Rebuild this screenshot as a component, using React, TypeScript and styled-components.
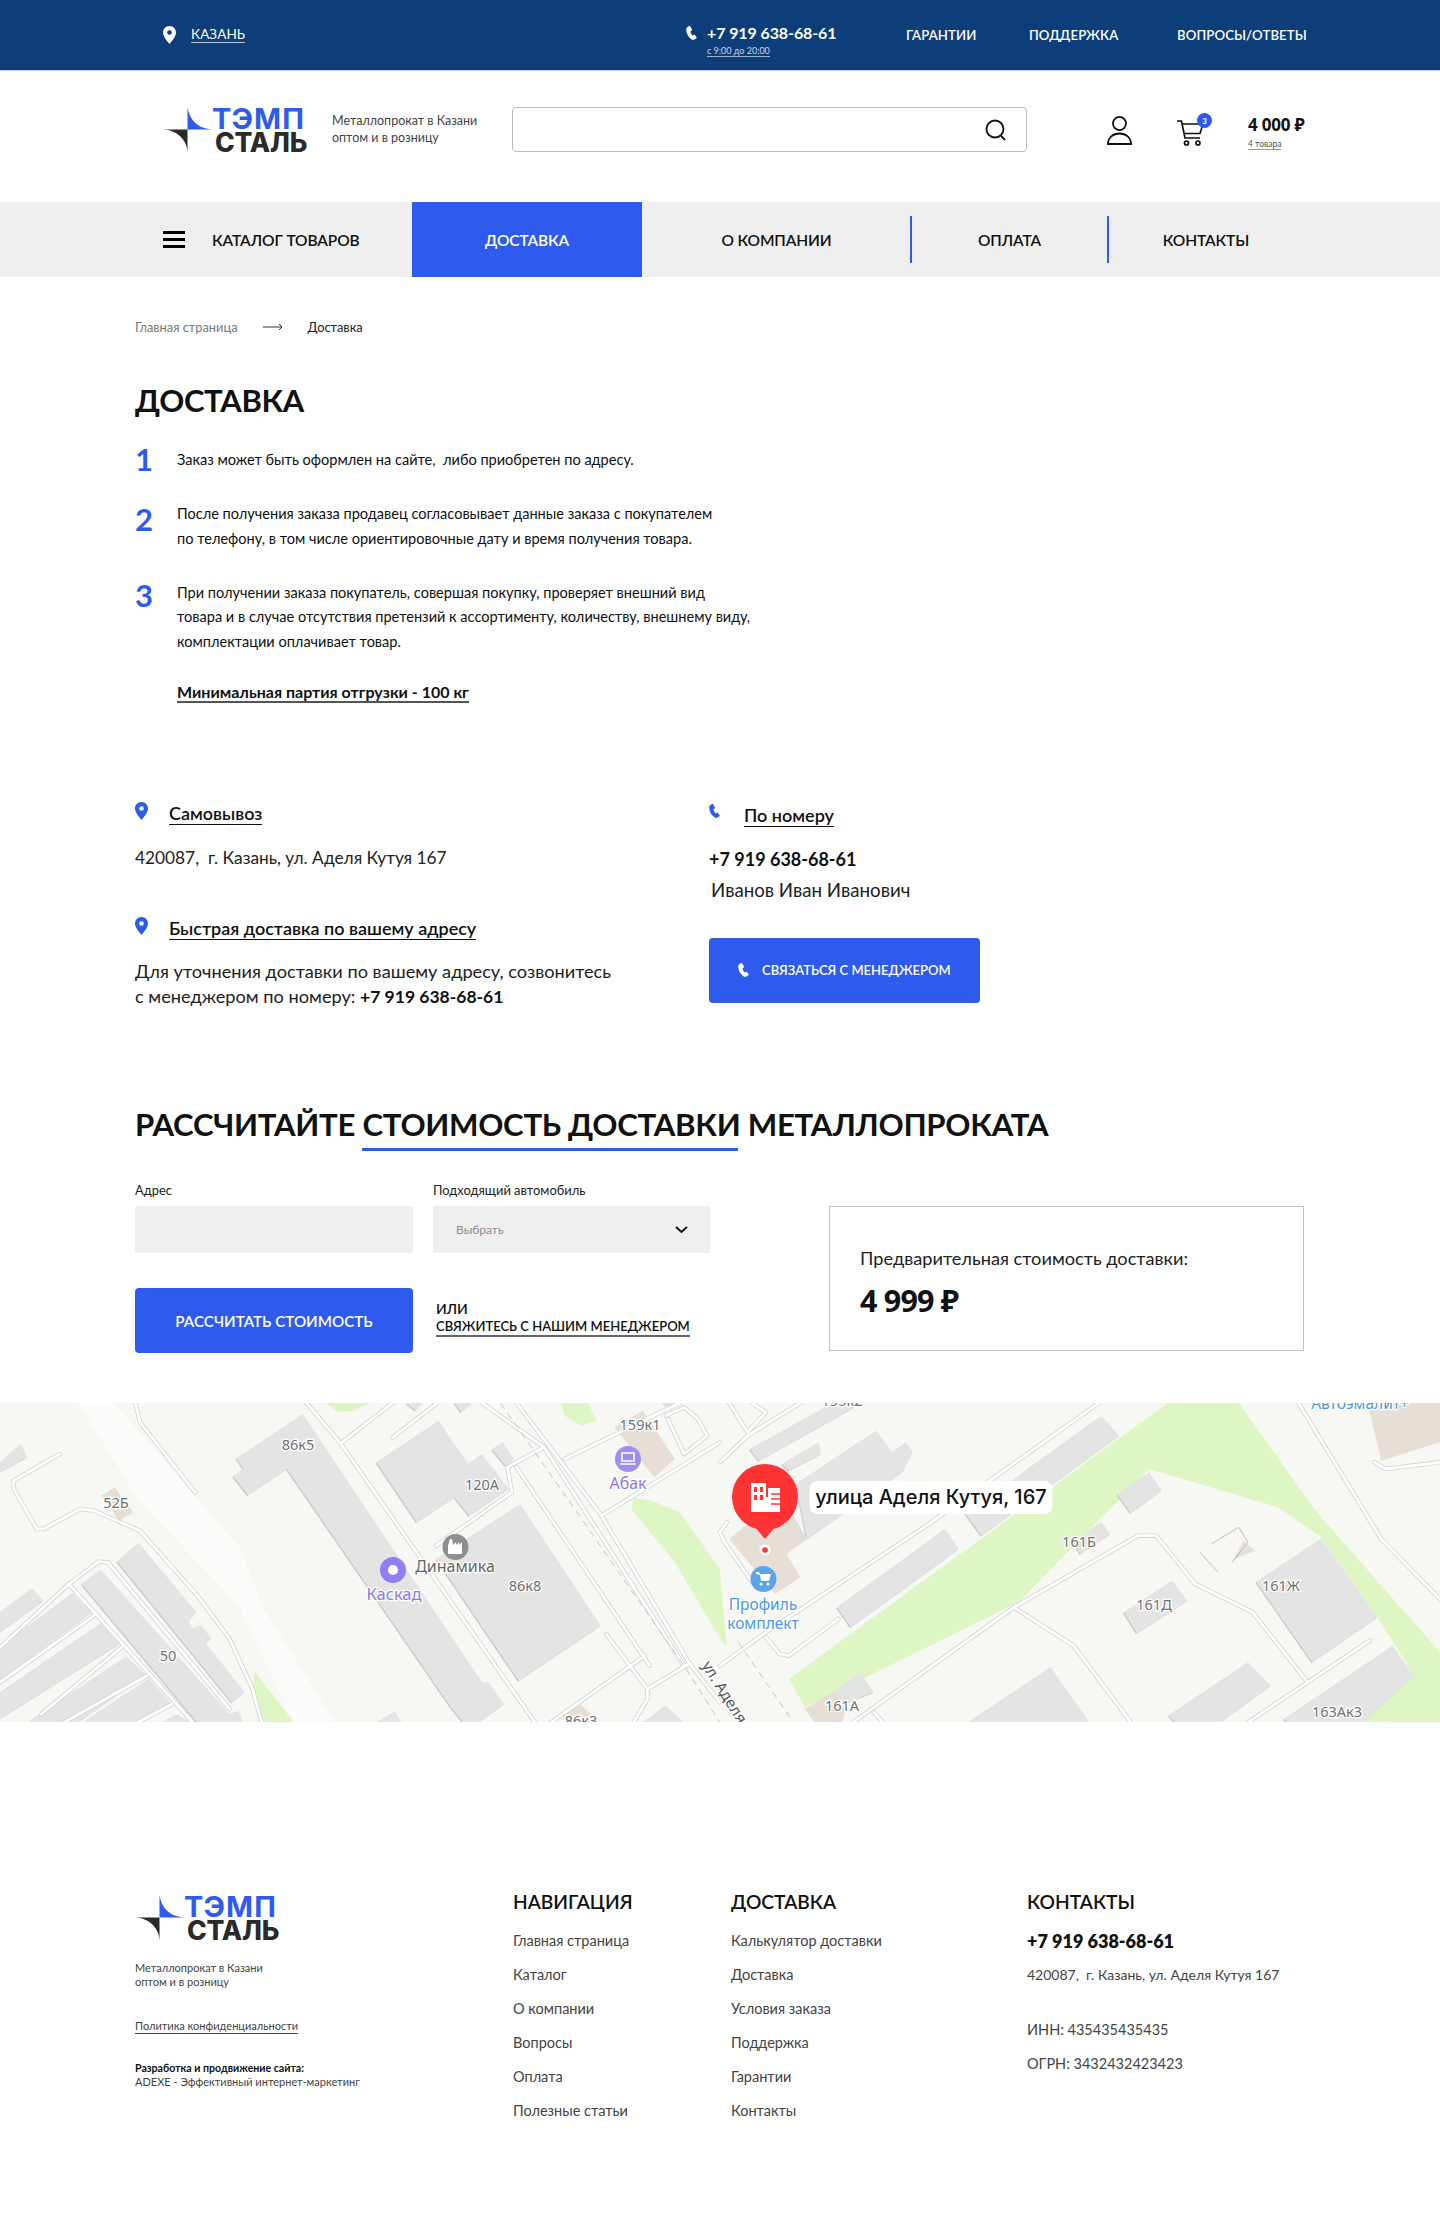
import React from 'react';
import styled, { createGlobalStyle } from 'styled-components';

const BLUE = '#2e5bee';
const FONT = '"Lato", "Open Sans", "Noto Sans", sans-serif';

const Global = createGlobalStyle`
  html, body { margin: 0; padding: 0; background: #fff; }
  body { font-family: ${FONT}; color: #111; }
  * { box-sizing: border-box; }
`;

const Page = styled.div`
  width: 1440px;
  height: 2219px;
  overflow: hidden;
`;

/* ---------- top bar ---------- */
const TopBar = styled.div`
  height: 71px;
  background: #0d3e7a;
  border-bottom: 1px solid #c8d3e2;
  padding-left: 163px;
  display: grid;
  grid-template-columns: 523px 220px 123px 148px 140px;
  align-items: center;
  color: #fff;
`;
const City = styled.div`
  display: flex;
  align-items: center;
  gap: 15px;
`;
const CityLink = styled.span`
  font-size: 13.5px;
  letter-spacing: 0.1px;
  border-bottom: 1px solid #b7c6da;
  line-height: 15px;
`;
const PhoneBlock = styled.div`
  display: grid;
  grid-template-columns: 21px auto;
  justify-content: start;
  align-items: center;
  margin-top: 10px;
`;
const TopPhone = styled.span`
  font-size: 16px;
  font-weight: 700;
  line-height: 20px;
  letter-spacing: -0.1px;
`;
const Hours = styled.span`
  grid-column: 2;
  justify-self: start;
  font-size: 9px;
  line-height: 11px;
  margin-top: 2px;
  color: #c9d5e6;
  border-bottom: 1px solid #9fb2cc;
`;
const TopLink = styled.span`
  font-size: 13.2px;
  font-weight: 600;
  letter-spacing: 0.1px;
`;

/* ---------- header ---------- */
const Header = styled.div`
  height: 131px;
  padding: 36px 0 0 163px;
  display: grid;
  grid-template-columns: 169px 180px 595px 70px 71px 100px;
  align-items: start;
`;
const LogoBox = styled.div`
  position: relative;
  width: 144px;
  height: 45px;
`;
const LogoStar = styled.svg`
  position: absolute;
  left: 0;
  top: 0;
`;
const LogoTop = styled.span`
  position: absolute;
  left: 49px;
  top: 1px;
  font-family: "Inter", sans-serif;
  font-size: 29px;
  line-height: 22px;
  font-weight: 700;
  color: ${BLUE};
  letter-spacing: 1.1px;
`;
const LogoBottom = styled.span`
  position: absolute;
  left: 52px;
  top: 24px;
  font-family: "Inter", sans-serif;
  font-size: 26.5px;
  line-height: 22px;
  font-weight: 800;
  color: #2a2a2a;
  letter-spacing: -0.2px;
`;
const Tagline = styled.div`
  font-size: 12.5px;
  line-height: 17px;
  color: #444;
  margin-top: 5px;
`;
const SearchBox = styled.div`
  width: 515px;
  height: 45px;
  border: 1.5px solid #bdbdbd;
  border-radius: 4px;
  display: flex;
  align-items: center;
  justify-content: flex-end;
  padding-right: 19px;
`;
const CartBox = styled.div`
  position: relative;
  width: 30px;
  margin-top: 11px;
`;
const Badge = styled.span`
  position: absolute;
  left: 20px;
  top: -5px;
  width: 15px;
  height: 15px;
  border-radius: 50%;
  background: ${BLUE};
  color: #fff;
  font-size: 8px;
  font-weight: 700;
  display: flex;
  align-items: center;
  justify-content: center;
`;
const UserBox = styled.div`
  margin-top: 9px;
`;
const PriceBlock = styled.div`
  display: flex;
  flex-direction: column;
  align-items: flex-start;
  margin-top: 7px;
`;
const Price = styled.span`
  font-size: 17px;
  font-weight: 700;
  line-height: 22px;
  letter-spacing: -0.2px;
  font-family: "Noto Sans", sans-serif;
`;
const PriceNote = styled.span`
  font-size: 8.5px;
  line-height: 10px;
  margin-top: 3px;
  color: #555;
  border-bottom: 1px solid #999;
`;

/* ---------- nav ---------- */
const Nav = styled.nav`
  height: 75px;
  background: #efefef;
  display: grid;
  grid-template-columns: 412px 230px 269px 197px 196px;
  margin-bottom: 40px;
`;
const NavCatalog = styled.div`
  padding-left: 163px;
  display: flex;
  align-items: center;
  gap: 27px;
  font-size: 15.5px;
  font-weight: 600;
  letter-spacing: -0.1px;
`;
const Burger = styled.span`
  width: 22px;
  height: 17px;
  border-top: 3px solid #000;
  border-bottom: 3px solid #000;
  position: relative;
  &::after {
    content: '';
    position: absolute;
    left: 0;
    right: 0;
    top: 4px;
    height: 3px;
    background: #000;
  }
`;
const NavItem = styled.div<{ $active?: boolean; $divider?: boolean }>`
  display: flex;
  align-items: center;
  justify-content: center;
  position: relative;
  font-size: 15.5px;
  font-weight: 600;
  letter-spacing: -0.1px;
  background: ${p => (p.$active ? BLUE : 'transparent')};
  color: ${p => (p.$active ? '#fff' : '#111')};
  ${p => p.$divider && `&::before { content: ''; position: absolute; left: -1px; top: 14px; height: 47px; width: 2px; background: ${BLUE}; }`}
`;

/* ---------- content ---------- */
const Main = styled.main`
  padding: 0 135px;
`;
const Crumbs = styled.div`
  height: 20px;
  display: flex;
  align-items: center;
  font-size: 12.8px;
  color: #7a7a7a;
  gap: 25px;
`;
const CrumbNow = styled.span`
  color: #222;
`;
const Title = styled.h1`
  margin: 43px 0 28px;
  font-size: 31px;
  line-height: 40px;
  font-weight: 700;
  color: #111;
  letter-spacing: -0.3px;
`;
const Steps = styled.ol`
  list-style: none;
  margin: 0;
  padding: 0;
  display: grid;
  gap: 29.5px;
`;
const Step = styled.li`
  display: grid;
  grid-template-columns: 42px 1fr;
`;
const StepNum = styled.span<{ $dy: number }>`
  font-size: 31px;
  font-weight: 700;
  line-height: 24px;
  color: ${BLUE};
  position: relative;
  top: ${p => p.$dy}px;
`;
const StepText = styled.p`
  margin: 0;
  font-size: 14.55px;
  line-height: 24.5px;
  color: #111;
  white-space: nowrap;
`;
const MinLine = styled.div`
  margin: 28px 0 0 42px;
  line-height: 20px;
`;
const MinLink = styled.span`
  font-size: 16px;
  font-weight: 700;
  border-bottom: 2px solid #555;
`;
const Contacts = styled.section`
  margin-top: 100px;
  display: grid;
  grid-template-columns: 574px 1fr;
`;
const ContactCol = styled.div`
  display: flex;
  flex-direction: column;
  align-items: flex-start;
`;
const ContactHead = styled.div<{ $wide?: boolean; $mt?: number }>`
  display: flex;
  align-items: flex-start;
  gap: ${p => (p.$wide ? 24 : 21)}px;
  height: 24px;
  margin-top: ${p => p.$mt ?? 0}px;
`;
const ContactHeadText = styled.span`
  font-size: 18px;
  font-weight: 600;
  line-height: 21px;
  margin-top: 1px;
  border-bottom: 1px solid #111;
`;
const Address = styled.p`
  margin: 18.5px 0 0;
  font-size: 17.3px;
  line-height: 26px;
  color: #222;
`;
const ContactNote = styled.p`
  margin: 17.5px 0 0;
  font-size: 18.2px;
  line-height: 25px;
  color: #222;
  white-space: nowrap;
`;
const ContactPhone = styled.p`
  margin: 17.5px 0 0;
  font-size: 18px;
  line-height: 26px;
  font-weight: 700;
  color: #111;
`;
const ContactName = styled.p`
  margin: 5px 0 0 2px;
  font-size: 18.7px;
  line-height: 26px;
  color: #222;
`;
const Strong = styled.b`
  font-size: 17.5px;
  font-weight: 700;
  color: #111;
`;
const CallButton = styled.button`
  width: 271px;
  height: 65px;
  margin-top: 35px;
  background: ${BLUE};
  border: 0;
  border-radius: 4px;
  color: #fff;
  font-family: ${FONT};
  font-size: 13px;
  font-weight: 600;
  display: flex;
  align-items: center;
  gap: 13px;
  padding-left: 29px;
`;
const CalcTitle = styled.h2`
  margin: 93.5px 0 0;
  font-size: 31.2px;
  line-height: 44px;
  font-weight: 700;
  color: #111;
  letter-spacing: -0.3px;
  white-space: nowrap;
`;
const Under = styled.span`
  position: relative;
  &::after {
    content: '';
    position: absolute;
    left: 0;
    right: 3px;
    bottom: -8px;
    height: 3px;
    background: ${BLUE};
  }
`;
const CalcGrid = styled.section`
  margin-top: 36px;
  display: grid;
  grid-template-columns: 694px 475px;
`;
const FormGrid = styled.div`
  display: grid;
  grid-template-columns: 278px 277px;
  column-gap: 20px;
  row-gap: 35px;
  align-items: start;
`;
const Field = styled.div`
  display: flex;
  flex-direction: column;
  gap: 8px;
`;
const Label = styled.label`
  font-size: 12.9px;
  line-height: 16px;
  color: #222;
`;
const InputBox = styled.div`
  height: 47px;
  background: #efefef;
  border-radius: 2px;
  display: flex;
  align-items: center;
  justify-content: space-between;
  padding: 0 22px 0 23px;
  font-size: 12px;
  color: #8c8c8c;
`;
const CalcButton = styled.button`
  height: 65px;
  background: ${BLUE};
  border: 0;
  border-radius: 4px;
  color: #fff;
  font-family: ${FONT};
  font-size: 15.2px;
  font-weight: 600;
`;
const OrBlock = styled.div`
  display: flex;
  flex-direction: column;
  align-items: flex-start;
  padding: 11px 0 0 3px;
  font-size: 14px;
  font-weight: 600;
  line-height: 19px;
`;
const OrLink = styled.span`
  border-bottom: 2px solid #666;
  line-height: 17px;
  font-size: 13px;
`;
const ResultBox = styled.div`
  height: 145px;
  margin-top: 24px;
  border: 1.5px solid #c4c4c4;
  padding: 38.5px 30px 0;
`;
const ResultLabel = styled.div`
  font-size: 18.2px;
  line-height: 24px;
  color: #222;
`;
const ResultValue = styled.div`
  margin-top: 11px;
  font-size: 30.5px;
  line-height: 38px;
  font-weight: 700;
  font-family: "Noto Sans", sans-serif;
  letter-spacing: -0.8px;
`;
const MapBox = styled.svg`
  display: block;
  width: 1440px;
  height: 319px;
  margin-top: 50px;
  background: #f7f7f4;
`;
const MapText = styled.text<{ $c?: string; $s?: number }>`
  font-family: "Noto Sans", sans-serif;
  font-size: ${p => p.$s ?? 14.5}px;
  fill: ${p => p.$c ?? '#6f6f6f'};
  stroke: #fff;
  stroke-width: 2.5px;
  paint-order: stroke;
  text-anchor: middle;
`;
const MapTitle = styled.text`
  font-family: "Inter", sans-serif;
  font-size: 20px;
  font-weight: 500;
  fill: #111;
  text-anchor: middle;
`;

/* ---------- footer ---------- */
const Footer = styled.footer`
  padding: 168px 0 0 135px;
  display: grid;
  grid-template-columns: 378px 218px 296px 300px;
  align-items: start;
`;
const FootBrand = styled.div`
  padding-top: 5px;
`;
const FootTag = styled.div`
  margin-top: 21px;
  font-size: 11px;
  line-height: 14px;
  color: #444;
`;
const FootPolicy = styled.span`
  display: inline-block;
  margin-top: 30px;
  font-size: 11px;
  line-height: 14px;
  color: #444;
  border-bottom: 1px solid #444;
`;
const FootDev = styled.div`
  margin-top: 27px;
  font-size: 11px;
  line-height: 14px;
  color: #444;
`;
const FootDevTitle = styled.b`
  display: block;
  font-size: 10.6px;
  font-weight: 700;
  color: #111;
`;
const FootHead = styled.div`
  font-size: 19.2px;
  line-height: 24px;
  font-weight: 600;
  color: #111;
`;
const FootList = styled.div`
  margin-top: 9px;
  display: grid;
  grid-auto-rows: 34px;
  align-items: center;
  font-size: 14.5px;
  color: #444;
`;
const FootPhone = styled.div`
  margin-top: 14px;
  font-size: 18px;
  line-height: 26px;
  font-weight: 800;
  color: #111;
`;
const FootInfo = styled.div<{ $gap?: number; $s?: number }>`
  margin-top: ${p => p.$gap ?? 0}px;
  font-size: ${p => p.$s ?? 14.5}px;
  line-height: 34px;
  color: #444;
`;

/* ---------- drawings ---------- */
const Pin = ({ color, w = 13, h = 18 }: { color: string; w?: number; h?: number }) => (
  <svg width={w} height={h} viewBox="0 0 13 18">
    <path fillRule="evenodd" fill={color} d="M6.5 0C2.9 0 0 2.9 0 6.5 0 10.5 4 15 6.5 18 9 15 13 10.500 13 6.500 13 2.900 10.100 0 6.500 0zM6.500 4.200a2.300 2.300 0 1 1 0 4.600 2.300 2.300 0 0 1 0-4.600z" />
  </svg>
);
const Handset = ({ color, w = 11, h = 14 }: { color: string; w?: number; h?: number }) => (
  <svg width={w} height={h} viewBox="0 0 11 14">
    <path fill={color} d="M2.200.4C.7 1.200 0 2.600.2 4.300c.4 3.800 2.600 7.500 5.500 9.200.7.400 1.500.5 2.300.2l2.400-1.400c.4-.2.500-.6.300-.9L8.900 9c-.2-.3-.6-.4-.9-.2l-1.300.8c-1-.9-2-2.900-2.200-4.400l1.200-.8c.3-.2.400-.5.300-.8L4.500.7C4.300.2 3.700 0 3.200.1z" />
  </svg>
);
const Logo = () => (
  <LogoBox>
    <LogoStar width="51" height="45" viewBox="0 0 51 45">
      <path fill={BLUE} d="M24.500 0V22.500H50C38 22 27 16 24.500 0z" />
      <path fill="#2a2a2a" d="M0 22.500H24.500V45C24 33 14 22.800 0 22.500z" />
    </LogoStar>
    <LogoTop>ТЭМП</LogoTop>
    <LogoBottom>СТАЛЬ</LogoBottom>
  </LogoBox>
);

const z = (s: string, ox = 0) =>
  s.trim().split(/\s+/).map(p => {
    const [x, y] = p.split(',').map(Number);
    return `${(x / 2.178 + ox).toFixed(1)},${(y / 3 - 4).toFixed(1)}`;
  }).join(' ');

const greens: [string, number][] = [
  ['710,12 735,38 770,35 805,12', 0],
  ['1222,12 1230,50 1265,80 1300,65 1280,12', 0],
  ['1380,295 1375,330 1470,490 1560,700 1583,745 1568,510 1480,340 1420,305', 0],
  ['555,818 550,860 575,970 640,970', 0],
  ['975,12 150,840 185,925 650,610 935,210 1215,325 1310,415 1432,655 1512,830 1400,970 1568,970 1568,760 1300,340 1130,12', 720],
];
const grays: [string, number][] = [
  ['660,45 1050,850 1062,848 1098,915 1040,972 1010,972 980,920 625,210 540,288 508,232 530,210 515,178', 0],
  ['955,65 820,190 908,370 990,295 1022,350 1108,270 1050,165 1020,195', 0],
  ['1095,130 1072,150 1100,200 1120,180', 0],
  ['1133,315 950,480 1130,845 1308,680', 0],
  ['302,432 255,487 505,910 533,880 448,733 460,718 438,678 418,688 412,665 428,640', 0],
  ['220,512 178,555 430,970 530,970 520,935 500,945', 0],
  ['70,568 0,640 0,700 95,605', 0],
  ['158,582 0,745 0,840 200,640', 0],
  ['220,672 0,880 0,960 260,735', 0],
  ['275,772 60,970 170,970 318,828', 0],
  ['325,838 180,970 300,970 370,910', 0],
  ['385,945 355,970 415,970', 0],
  ['0,190 45,135 60,175 0,220', 0],
  ['1450,920 1400,970 1490,970', 0],
  ['860,937 820,970 875,970', 0],
  ['885,12 905,35 920,12', 0],
  ['990,12 1005,40 1028,12', 0],
  ['830,50 870,110 570,410 535,345', 720],
  ['215,130 135,195 150,215 220,165', 720],
  ['340,95 165,255 190,420 400,215 420,160 405,130 375,160', 720],
  ['245,12 65,150 85,185 310,12', 720],
  ['490,390 255,625 285,685 520,450', 720],
  ['935,220 865,285 895,342 962,275', 720],
  ['830,368 770,430 785,465 850,405', 720],
  ['985,545 880,640 908,703 1018,605', 720],
  ['1310,418 1168,548 1290,790 1432,655', 720],
  ['720,805 540,970 805,970', 720],
  ['1150,790 978,948 990,970 1090,970 1200,860', 720],
  ['1465,740 1228,960 1235,970 1400,970 1512,830', 720],
  ['305,818 250,880 280,910 335,880', 720],
];
const beiges: [string, number][] = [
  ['250,265 220,290 260,365 290,340', 0],
  ['1262,912 1225,950 1235,970 1290,970 1290,950', 0],
  ['1400,35 1338,85 1425,235 1470,180', 0],
  ['1440,12 1455,30 1470,12', 0],
  ['250,875 185,930 205,970 265,970 280,910', 720],
  ['90,340 20,420 120,585 175,535 145,465 190,420 160,350', 720],
  ['1410,12 1440,185 1568,130 1568,12', 720],
  ['1120,480 1165,455 1140,425 1115,490', 720],
];
const roads: [string, number][] = [
  ['668,12 740,130 1165,970', 0],
  ['745,130 855,12', 0],
  ['855,115 950,15', 0],
  ['295,12 305,70 425,280', 0],
  ['130,165 30,245 30,270 80,390 95,390 175,330 205,335 305,395 430,590 500,720 550,870 570,970', 0],
  ['150,555 215,488 235,490 500,930', 0],
  ['150,555 420,970', 0],
  ['150,555 0,745', 0],
  ['205,650 0,850', 0],
  ['265,745 90,945', 0],
  ['320,830 140,970', 0],
  ['375,915 300,970', 0],
  ['1125,12 1310,350 1500,790 1568,910', 0],
  ['1050,12 1185,145 1490,800', 0],
  ['1125,205 1415,800', 0],
  ['1105,205 1185,145', 0],
  ['1105,205 1115,280 950,440', 0],
  ['1230,180 1480,12', 0],
  ['1310,350 1568,130', 0],
  ['1320,705 1410,870 1410,900 1380,970', 0],
  ['1410,870 1500,795', 0],
  ['1200,970 1405,770', 0],
  ['1450,50 1490,25 1520,60 1540,110 1490,165 1455,60', 0],
  ['825,12 450,380 100,700 0,800', 720],
  ['640,625 910,410 950,410 1035,555 1160,640 1280,850', 720],
  ['640,625 290,970', 720],
  ['640,625 770,740 895,970', 720],
  ['1415,725 1280,850 1150,970', 720],
  ['258,660 150,770 130,765 100,715', 720],
  ['1260,12 1440,420 1568,600', 720],
  ['1425,190 1450,210 1568,190', 720],
  ['335,940 355,970', 720],
  ['15,370 0,400 10,430 70,550', 720],
  ['175,12 60,110 0,190', 720],
  ['70,12 100,40 60,100 20,12', 720],
];
type L = [string, number, number, string?, number?];
const labels: L[] = [
  ['86к5', 298, 47], ['120А', 482, 87], ['159к1', 640, 27], ['52Б', 116, 105], ['86к8', 525, 188], ['50', 168, 258],
  ['86к3', 581, 323], ['161Б', 1079, 144], ['161Д', 1154, 207], ['161Ж', 1281, 188], ['161А', 842, 308], ['163Ак3', 1337, 314],
  ['155к2', 842, 3], ['Автоэмалит+', 1360, 6, '#4c97e6', 15.5],
  ['Динамика', 455, 169, '#666', 16], ['Каскад', 394, 197, '#8a78ea', 16.5], ['Абак', 628, 86, '#8a78ea', 16],
  ['Профиль', 763, 207, '#4c97e6', 15.5], ['комплект', 763, 226, '#4c97e6', 15.5],
];

const MapView = () => (
  <MapBox viewBox="0 0 1440 319">
    <polygon fill="#fcfcfa" points={z('165,0 240,0 525,450 570,620 730,972 640,972 520,620 300,300')} />
    {greens.map(([s, o]) => <polygon key={s} fill="#def6c4" points={z(s, o)} />)}
    {grays.map(([s, o]) => <polygon key={s} transform="translate(-1 1)" fill="#cbcbcb" points={z(s, o)} />)}
    {grays.map(([s, o]) => <polygon key={s} fill="#e4e4e4" points={z(s, o)} />)}
    {beiges.map(([s, o]) => <polygon key={s} fill="#e7dfd5" points={z(s, o)} />)}
    {roads.map(([s, o]) => <polyline key={s} fill="none" stroke="#d4d4d4" strokeWidth="4.500" strokeLinejoin="round" strokeLinecap="round" points={z(s, o)} />)}
    {roads.map(([s, o]) => <polyline key={s} fill="none" stroke="#fff" strokeWidth="2.800" strokeLinejoin="round" strokeLinecap="round" points={z(s, o)} />)}
    <polyline fill="none" stroke="#c4c4c4" strokeDasharray="7 5" points={z('1090,12 1490,800 1568,970')} />
    <polyline fill="none" stroke="#c4c4c4" strokeDasharray="7 5" points={z('40,730 160,970', 720)} />
    <polyline fill="none" stroke="#bdbdbd" points={z('1070,435 1130,385 1150,430 1115,490', 720)} />
    <polyline fill="none" stroke="#bdbdbd" points={z('1045,460 1085,520', 720)} />
    {labels.map(([t, x, y, c, s]) => <MapText key={t} x={x} y={y} $c={c} $s={s}>{t}</MapText>)}
    <MapText x={0} y={0} $c="#555" $s={15.500} transform="translate(720 292) rotate(58)">ул. Аделя</MapText>

    <circle cx="393" cy="167" r="13" fill="#8f7ff0" />
    <circle cx="393" cy="167" r="5" fill="#fff" />
    <circle cx="455.500" cy="144" r="13" fill="#8e8e8e" />
    <path fill="#fff" d="M448 151v-9l2-6h2l1 6 3-3v3l3-3v3l3-3v12z" />
    <circle cx="628" cy="56" r="13" fill="#9d8ff0" />
    <path fill="none" stroke="#fff" strokeWidth="1.500" d="M622 50h12v8h-12zM620 61h16" />
    <circle cx="763.500" cy="176" r="13" fill="#5ba4ec" />
    <path fill="#fff" d="M756 169h3l1 2h11l-2 7h-8l-1-6-4-1z" />
    <circle cx="761" cy="181" r="1.500" fill="#fff" />
    <circle cx="768" cy="181" r="1.500" fill="#fff" />

    <ellipse cx="765" cy="94" rx="33" ry="33" fill="#ff3333" />
    <path fill="#ff3333" d="M755 124h20l-10 12z" />
    <circle cx="765" cy="147" r="5.500" fill="#fff" />
    <circle cx="765" cy="147" r="2.800" fill="#f33" />
    <path fill="#fff" fillRule="evenodd" d="M751 80h15v14h2v-9h12v24h-29zM754 84v5h3v-5zM760 84v5h3v-5zM754 92v5h3v-5zM760 92v5h3v-5z" />
    <path stroke="#ff3333" strokeWidth="1.500" d="M771 91h9M771 96h9M771 101h9" />
    <rect x="809.500" y="78" width="243" height="33" rx="8" fill="#fff" />
    <MapTitle x="931" y="101">улица Аделя Кутуя, 167</MapTitle>
  </MapBox>
);

export default function App() {
  return (
    <Page>
      <Global />
      <TopBar>
        <City><Pin color="#fff" /><CityLink>КАЗАНЬ</CityLink></City>
        <PhoneBlock>
          <Handset color="#fff" />
          <TopPhone>+7 919 638-68-61</TopPhone>
          <Hours>с 9:00 до 20:00</Hours>
        </PhoneBlock>
        <TopLink>ГАРАНТИИ</TopLink>
        <TopLink>ПОДДЕРЖКА</TopLink>
        <TopLink>ВОПРОСЫ/ОТВЕТЫ</TopLink>
      </TopBar>

      <Header>
        <Logo />
        <Tagline>Металлопрокат в Казани<br />оптом и в розницу</Tagline>
        <SearchBox>
          <svg width="22" height="24" viewBox="0 0 22 24" fill="none" stroke="#111" strokeWidth="1.800">
            <circle cx="10" cy="11" r="8.500" /><path d="M16 18l4 4" />
          </svg>
        </SearchBox>
        <UserBox>
          <svg width="25" height="29" viewBox="0 0 25 29" fill="none" stroke="#111" strokeWidth="1.800">
            <ellipse cx="12.500" cy="7.500" rx="6.500" ry="6.600" />
            <path d="M1 28c0-6.500 5-10.500 11.500-10.500S24 21.500 24 28z" />
          </svg>
        </UserBox>
        <CartBox>
          <svg width="28" height="28" viewBox="0 0 28 28" fill="none" stroke="#111" strokeWidth="1.700">
            <path d="M0 3h4.500l3.500 17h15" /><path d="M5 6h21l-3 9.500H7" />
            <circle cx="9.500" cy="25" r="2" /><circle cx="21" cy="25" r="2" />
          </svg>
          <Badge>3</Badge>
        </CartBox>
        <PriceBlock>
          <Price>4 000 ₽</Price>
          <PriceNote>4 товара</PriceNote>
        </PriceBlock>
      </Header>

      <Nav>
        <NavCatalog><Burger />КАТАЛОГ ТОВАРОВ</NavCatalog>
        <NavItem $active>ДОСТАВКА</NavItem>
        <NavItem>О КОМПАНИИ</NavItem>
        <NavItem $divider>ОПЛАТА</NavItem>
        <NavItem $divider>КОНТАКТЫ</NavItem>
      </Nav>

      <Main>
        <Crumbs>
          <span>Главная страница</span>
          <svg width="20" height="8" viewBox="0 0 20 8" fill="none" stroke="#333"><path d="M0 4h19M16 1l3 3-3 3" /></svg>
          <CrumbNow>Доставка</CrumbNow>
        </Crumbs>
        <Title>ДОСТАВКА</Title>
        <Steps>
          <Step><StepNum $dy={-1}>1</StepNum><StepText>Заказ может быть оформлен на сайте,&nbsp; либо приобретен по адресу.</StepText></Step>
          <Step><StepNum $dy={5}>2</StepNum><StepText>После получения заказа продавец согласовывает данные заказа с покупателем<br />по телефону, в том числе ориентировочные дату и время получения товара.</StepText></Step>
          <Step><StepNum $dy={2}>3</StepNum><StepText>При получении заказа покупатель, совершая покупку, проверяет внешний вид<br />товара и в случае отсутствия претензий к ассортименту, количеству, внешнему виду,<br />комплектации оплачивает товар.</StepText></Step>
        </Steps>
        <MinLine><MinLink>Минимальная партия отгрузки - 100 кг</MinLink></MinLine>

        <Contacts>
          <ContactCol>
            <ContactHead><Pin color={BLUE} /><ContactHeadText>Самовывоз</ContactHeadText></ContactHead>
            <Address>420087,&nbsp; г. Казань, ул. Аделя Кутуя 167</Address>
            <ContactHead $mt={46.5}><Pin color={BLUE} /><ContactHeadText>Быстрая доставка по вашему адресу</ContactHeadText></ContactHead>
            <ContactNote>Для уточнения доставки по вашему адресу, созвонитесь<br />с менеджером по номеру: <Strong>+7 919 638-68-61</Strong></ContactNote>
          </ContactCol>
          <ContactCol>
            <ContactHead $wide $mt={2}><Handset color={BLUE} /><ContactHeadText>По номеру</ContactHeadText></ContactHead>
            <ContactPhone>+7 919 638-68-61</ContactPhone>
            <ContactName>Иванов Иван Иванович</ContactName>
            <CallButton><Handset color="#fff" />СВЯЗАТЬСЯ С МЕНЕДЖЕРОМ</CallButton>
          </ContactCol>
        </Contacts>

        <CalcTitle>РАССЧИТАЙТЕ <Under>СТОИМОСТЬ ДОСТАВКИ</Under> МЕТАЛЛОПРОКАТА</CalcTitle>
        <CalcGrid>
          <FormGrid>
            <Field><Label>Адрес</Label><InputBox /></Field>
            <Field>
              <Label>Подходящий автомобиль</Label>
              <InputBox>
                Выбрать
                <svg width="13" height="8" viewBox="0 0 13 8" fill="none" stroke="#111" strokeWidth="2"><path d="M1 1l5.500 5L12 1" /></svg>
              </InputBox>
            </Field>
            <CalcButton>РАССЧИТАТЬ СТОИМОСТЬ</CalcButton>
            <OrBlock>ИЛИ<OrLink>СВЯЖИТЕСЬ С НАШИМ МЕНЕДЖЕРОМ</OrLink></OrBlock>
          </FormGrid>
          <ResultBox>
            <ResultLabel>Предварительная стоимость доставки:</ResultLabel>
            <ResultValue>4 999 ₽</ResultValue>
          </ResultBox>
        </CalcGrid>
      </Main>

      <MapView />

      <Footer>
        <FootBrand>
          <Logo />
          <FootTag>Металлопрокат в Казани<br />оптом и в розницу</FootTag>
          <FootPolicy>Политика конфиденциальности</FootPolicy>
          <FootDev><FootDevTitle>Разработка и продвижение сайта:</FootDevTitle>ADEXE - Эффективный интернет-маркетинг</FootDev>
        </FootBrand>
        <div>
          <FootHead>НАВИГАЦИЯ</FootHead>
          <FootList>
            <span>Главная страница</span><span>Каталог</span><span>О компании</span><span>Вопросы</span><span>Оплата</span><span>Полезные статьи</span>
          </FootList>
        </div>
        <div>
          <FootHead>ДОСТАВКА</FootHead>
          <FootList>
            <span>Калькулятор доставки</span><span>Доставка</span><span>Условия заказа</span><span>Поддержка</span><span>Гарантии</span><span>Контакты</span>
          </FootList>
        </div>
        <div>
          <FootHead>КОНТАКТЫ</FootHead>
          <FootPhone>+7 919 638-68-61</FootPhone>
          <FootInfo $s={14} $gap={4}>420087,&nbsp; г. Казань, ул. Аделя Кутуя 167</FootInfo>
          <FootInfo $gap={21}>ИНН: 435435435435</FootInfo>
          <FootInfo>ОГРН: 3432432423423</FootInfo>
        </div>
      </Footer>
    </Page>
  );
}
